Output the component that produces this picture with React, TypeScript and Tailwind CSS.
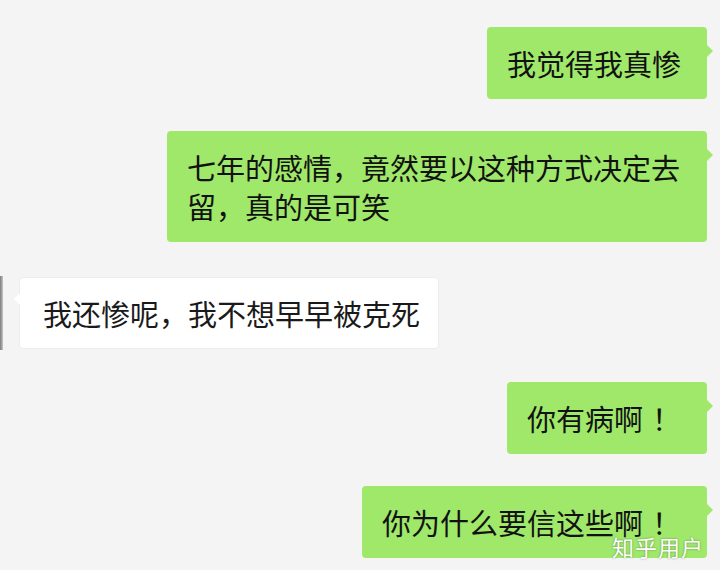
import React from "react";

const font = { fontFamily: '"Noto Sans CJK SC", "Noto Sans", sans-serif' };

function Right({
  children,
  w,
  mt,
  tight,
}: {
  children: React.ReactNode;
  w: string;
  mt: string;
  tight?: boolean;
}) {
  return (
    <div className={`flex justify-end pr-[13px] ${mt}`}>
      <div
        className={`relative ${w} rounded-[4px] bg-[#9fe86a] pl-[20px] pr-[18px] text-[29px] text-[#121212] ${
          tight ? "pt-[21px] pb-[21px] leading-[30px]" : "pt-[17px] pb-[16px] leading-[39px]"
        }`}
      >
        {children}
        <div className="absolute right-[-6px] top-[18px] h-0 w-0 border-y-[6px] border-l-[6px] border-y-transparent border-l-[#9fe86a]" />
      </div>
    </div>
  );
}

export default function App() {
  return (
    <div
      className="relative flex h-[570px] w-[720px] flex-col overflow-hidden bg-[#f4f4f4] pt-[27px]"
      style={font}
    >
      <Right w="w-[220px]" mt="">
        我觉得我真惨
      </Right>
      <Right w="w-[540px]" mt="mt-[32px]">
        七年的感情，竟然要以这种方式决定去留，真的是可笑
      </Right>
      <div className="mt-[34px] flex items-center">
        <div className="h-[74px] w-[3px] bg-gradient-to-r from-[#7a7a7a] to-[#c8c8c8]" />
        <div className="relative ml-[16px] w-[420px] rounded-[4px] border border-[#ececec] bg-white pl-[23px] pr-[12px] pt-[16px] pb-[15px] text-[29px] leading-[39px] text-[#1a1a1a]">
          我还惨呢，我不想早早被克死
          <div className="absolute left-[-6px] top-[15px] h-0 w-0 border-y-[6px] border-r-[6px] border-y-transparent border-r-white" />
        </div>
      </div>
      <Right w="w-[200px]" mt="mt-[32px]">
        你有病啊<span className="ml-[9px]">！</span>
      </Right>
      <Right w="w-[345px]" mt="mt-[32px]" tight>
        你为什么要信这些啊<span className="ml-[9px]">！</span>
      </Right>
      <div
        className="absolute left-[612px] top-[536px] text-[22px] leading-[20px] tracking-[1px] text-white"
        style={{ textShadow: "0 0 2px rgba(0,0,0,0.45)" }}
      >
        知乎用户
      </div>
    </div>
  );
}
